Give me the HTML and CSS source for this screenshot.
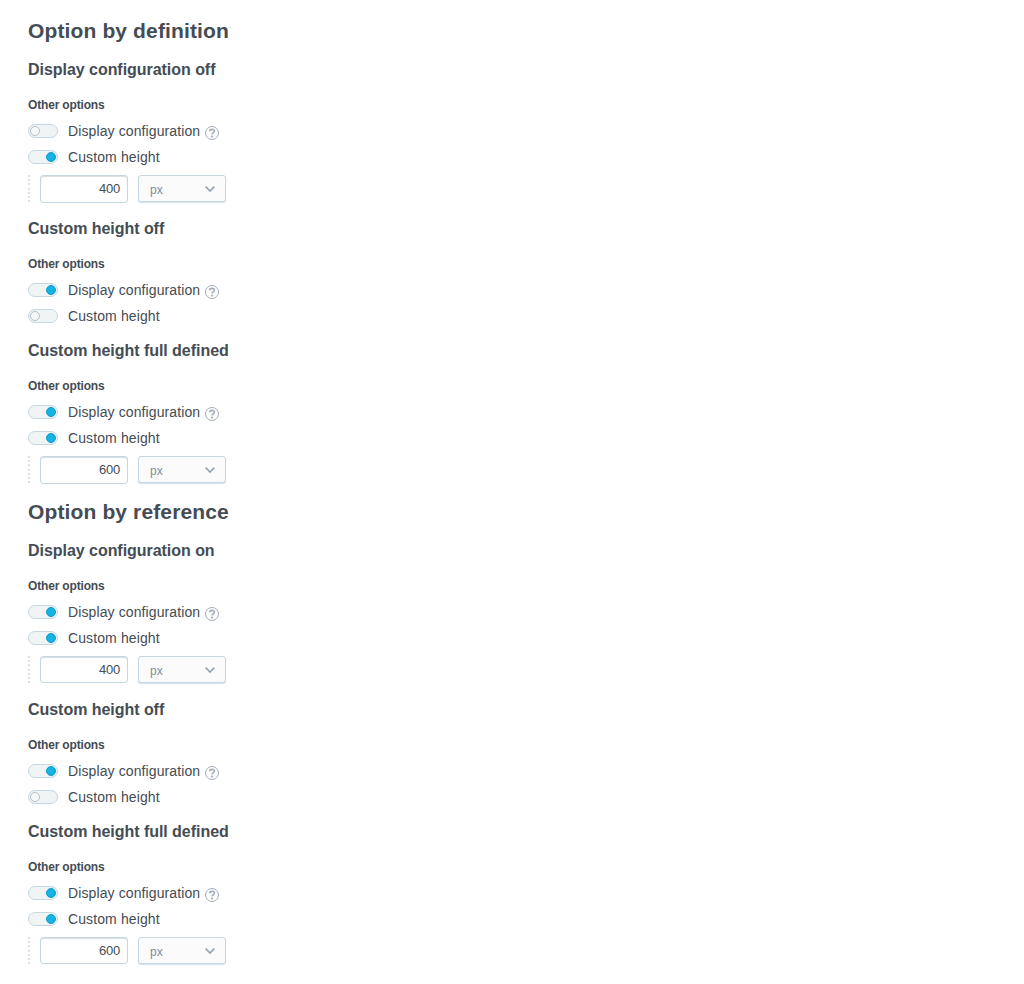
FILE: index.html
```html
<!DOCTYPE html>
<html lang="en">
<head>
<meta charset="utf-8">
<title>Other options</title>
<link rel="stylesheet" href="styles.css">
</head>
<body>
<main class="page" id="page"></main>
<script src="app.js"></script>
</body>
</html>
```
FILE: styles.css
```css
body {
  margin: 0;
  background: #fff;
  color: #444c54;
  font-family: "Liberation Sans", Arial, sans-serif;
}
.page { padding: 19px 28px 0; }
.title {
  margin: 0 0 18px;
  font-size: 21px;
  line-height: 24px;
  letter-spacing: 0.13px;
}
.subtitle {
  margin: 0 0 19px;
  font-size: 16px;
  line-height: 18px;
  letter-spacing: -0.04px;
}
.story { padding-bottom: 13px; }
.story:last-child { padding-bottom: 12px; }
.legend {
  margin: 0 0 6px;
  font-size: 12px;
  line-height: 14px;
  font-weight: bold;
  letter-spacing: -0.17px;
}
.option {
  display: flex;
  align-items: center;
  height: 26px;
  font-size: 14px;
  letter-spacing: 0.11px;
}
.toggle {
  box-sizing: border-box;
  display: flex;
  align-items: center;
  width: 30px;
  height: 14px;
  margin-right: 10px;
  padding: 0 1px;
  border: 1px solid #c5d7e3;
  border-radius: 7px;
  background: #f0f4f5;
}
.knob {
  box-sizing: border-box;
  width: 10px;
  height: 10px;
  border: 1px solid #b3bfcb;
  border-radius: 50%;
  background: #f5f8f9;
}
.on { justify-content: flex-end; }
.on .knob { border-color: #0f9dc9; background: #16b3e4; }
.help { width: 14px; height: 14px; margin: 3px 0 0 5px; }
.dimension {
  display: flex;
  gap: 10px;
  height: 27px;
  padding: 5px 0;
}
.rail {
  width: 2px;
  background: repeating-linear-gradient(#dbe1e8 0 2px, transparent 2px 4.2px);
}
.value, .unit {
  box-sizing: border-box;
  width: 88px;
  height: 28px;
  border: 1px solid #c5d7e3;
  border-radius: 3px;
}
.value {
  padding-right: 7px;
  font-size: 13px;
  line-height: 26px;
  letter-spacing: -0.2px;
  text-align: right;
  box-shadow: inset 0 1px 1px #d9dee2;
}
.unit {
  display: flex;
  align-items: center;
  justify-content: space-between;
  height: 27px;
  padding: 1px 10px 0 11px;
  background: #fbfbfb;
  box-shadow: 0 1px 1px #d5e0e8;
  color: #7f8b97;
  font-size: 12px;
}
.unit span { padding-top: 2px; }
.dimension.short .value { height: 27px; }
.chevron { width: 10px; height: 6px; }
```
FILE: app.js
```js
const groups = [
  { title: 'Option by definition', stories: [
    { name: 'Display configuration off', display: false, height: 400 },
    { name: 'Custom height off', display: true },
    { name: 'Custom height full defined', display: true, height: 600 }
  ]},
  { title: 'Option by reference', stories: [
    { name: 'Display configuration on', display: true, height: 400 },
    { name: 'Custom height off', display: true },
    { name: 'Custom height full defined', display: true, height: 600 }
  ]}
];

const help = `<svg class="help" viewBox="0 0 14 14" fill="none" stroke="#a0abb8">
  <circle cx="7" cy="7" r="6.5"/>
  <path d="M4.6 5.3C4.6 2.8 9.5 2.8 9.5 5.1C9.5 6.6 7.1 6.6 7.1 8.6" stroke-width="1.6"/>
  <path d="M7.1 9.7v1.7" stroke-width="1.9"/></svg>`;
const chevron = `<svg class="chevron" viewBox="0 0 10 6" fill="none" stroke="#97a3b0" stroke-width="1.7"><path d="M.7 .7 5 5 9.3 .7"/></svg>`;

const option = (label, on, extra = '') =>
  `<div class="option"><span class="toggle ${on ? 'on' : ''}"><span class="knob"></span></span><span>${label}</span>${extra}</div>`;

const dimension = (value, short) =>
  `<div class="dimension ${short ? 'short' : ''}"><div class="rail"></div><div class="value">${value}</div><div class="unit"><span>px</span>${chevron}</div></div>`;

const story = (s, short) => `<div class="story">
  <h2 class="subtitle">${s.name}</h2>
  <p class="legend">Other options</p>
  ${option('Display configuration', s.display, help)}
  ${option('Custom height', !!s.height)}
  ${s.height ? dimension(s.height, short) : ''}</div>`;

document.getElementById('page').innerHTML = groups.map((g, i) =>
  `<section class="group"><h1 class="title">${g.title}</h1>${g.stories.map(s => story(s, i === 1)).join('')}</section>`
).join('');
```
